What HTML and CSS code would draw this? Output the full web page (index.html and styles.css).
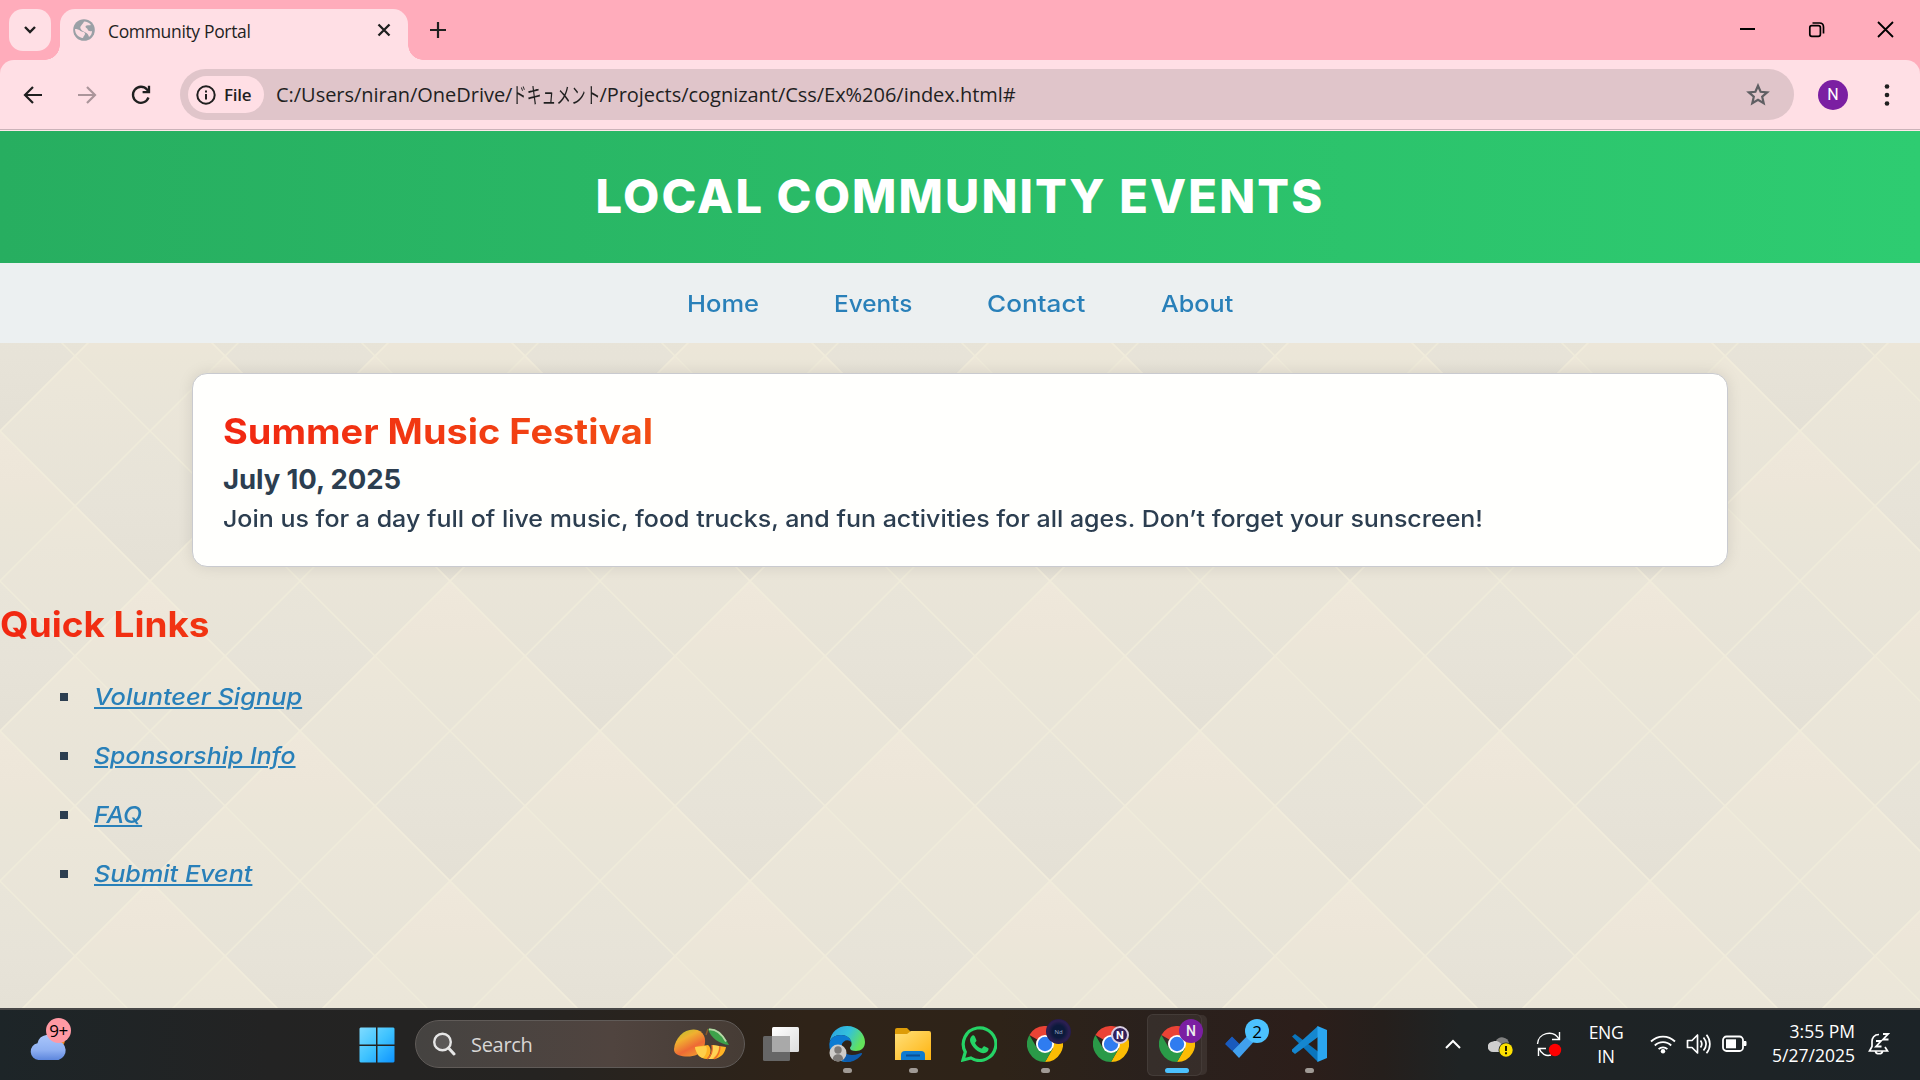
FILE: index.html
```html
<!DOCTYPE html>
<html lang="en">
<head>
<meta charset="utf-8">
<title>Community Portal</title>
<link rel="stylesheet" href="styles.css">
</head>
<body>
<svg class="defs" width="0" height="0" aria-hidden="true">
  <defs>
    <linearGradient id="yel" x1="0" y1="0" x2="1" y2="1"><stop offset="0" stop-color="#ffe07a"/><stop offset="1" stop-color="#ffb30f"/></linearGradient>
    <symbol id="chrome" viewBox="0 0 36 36">
      <path d="M18 18 2.400 9A18 18 0 0 1 33.600 9z" fill="#ea4335"/>
      <path d="M18 9h15.600A18 18 0 0 1 18 36l7.800-13.500z" fill="#fbbc04"/>
      <path d="M18 36A18 18 0 0 1 2.400 9l7.800 13.500L18 27l7.800-4.500z" fill="#2a9a48"/>
      <circle cx="18" cy="18" r="9" fill="#fff"/>
      <circle cx="18" cy="18" r="7.200" fill="#2f7cf0"/>
    </symbol>
  </defs>
</svg>

<div class="window">
  <div class="tabstrip">
    <button class="tab-search"><svg width="12" height="8" viewBox="0 0 12 8"><path d="M1 1l5 5 5-5" fill="none" stroke="#1f1f1f" stroke-width="2.400"/></svg></button>
    <div class="tab">
      <svg class="favicon" width="22" height="22" viewBox="0 0 22 22"><circle cx="11" cy="11" r="10.800" fill="#9aa0a6"/><path d="M2 10c2 0 4 .5 5.500 2 1.500 1 4 .5 4.500 2.500.3 1.500-1.500 2-2 4.500C5.500 18.500 2 15 2 10zM11 2.500c3 0 5.500 1.300 7 3.500-1.500.5-5-.5-5.500 1.500-.3 1.500 1.800 1.200 2.200 3 .3 1.500 1.800 2 4.300 1.500 0 2.500-1 4.500-3 6-.5-2.500-1.500-3.500-3.500-4.500C10.500 12.500 8.500 12 7.500 9.500 6.500 7 10 5.500 11 2.500z" fill="#fbdde2"/></svg>
      <span class="tab-title">Community Portal</span>
      <svg class="tab-close" width="14" height="14" viewBox="0 0 14 14"><path d="M1.500 1.500l11 11m0-11l-11 11" stroke="#1f1f1f" stroke-width="2.300"/></svg>
    </div>
    <svg class="new-tab" width="16" height="16" viewBox="0 0 16 16"><path d="M8 0v16M0 8h16" stroke="#1f1f1f" stroke-width="2.200"/></svg>
    <div class="win-controls">
      <svg width="17" height="17" viewBox="0 0 17 17"><path d="M1 8h15" stroke="#000" stroke-width="2"/></svg>
      <svg width="17" height="17" viewBox="0 0 17 17" fill="none" stroke="#000" stroke-width="1.700"><rect x="1.800" y="4.700" width="10.600" height="10.600" rx="2"/><path d="M4.500 2h7c2.600 0 4 1.400 4 4v6.500"/></svg>
      <svg width="17" height="17" viewBox="0 0 17 17"><path d="M1 1l15 15M16 1L1 16" stroke="#000" stroke-width="1.800"/></svg>
    </div>
  </div>

  <div class="toolbar">
    <svg class="tool back" width="20" height="20" viewBox="0 0 20 20" fill="none" stroke="#1f1f1f" stroke-width="2.200"><path d="M19 10H2.500M10 2l-8 8 8 8"/></svg>
    <svg class="tool forward" width="20" height="20" viewBox="0 0 20 20" fill="none" stroke="#ab959a" stroke-width="2.200"><path d="M1 10h16.500M10 2l8 8-8 8"/></svg>
    <svg class="tool reload" width="20" height="20" viewBox="0 0 20 20" fill="none" stroke="#1f1f1f" stroke-width="2.300"><path d="M17.500 12.500A8 8 0 1 1 16 4.500l1.500 2"/><path d="M18 .8v6.400h-6.400"/></svg>
    <div class="omnibox">
      <div class="chip">
        <svg width="20" height="20" viewBox="0 0 20 20"><circle cx="10" cy="10" r="8.700" fill="none" stroke="#1f1f1f" stroke-width="2"/><path d="M10 9v5.500M10 5.500v2" stroke="#1f1f1f" stroke-width="2"/></svg>
        <span>File</span>
      </div>
      <div class="url"><span>C:/Users/niran/OneDrive/</span><span class="kana"><span class="kana-text">ドキュメント</span></span><span>/Projects/cognizant/Css/Ex%206/index.html#</span></div>
      <svg class="star" width="24" height="23" viewBox="0 0 24 23"><path d="M12 2.700l2.600 6.100 6.600.6-5 4.300 1.500 6.500-5.700-3.500-5.700 3.500 1.500-6.500-5-4.300 6.600-.6z" fill="none" stroke="#5f5f63" stroke-width="2.200"/></svg>
    </div>
    <div class="avatar">N</div>
    <svg class="menu" width="6" height="22" viewBox="0 0 6 22" fill="#1f1f1f"><circle cx="3" cy="2.500" r="2.300"/><circle cx="3" cy="11" r="2.300"/><circle cx="3" cy="19.500" r="2.300"/></svg>
  </div>

  <div class="page">
    <svg class="backdrop" width="1920" height="877">
      <defs>
        <linearGradient id="peach" x1="0" y1="0" x2="0" y2="1"><stop offset="0" stop-color="#efe8db"/><stop offset=".35" stop-color="#ede6d9"/><stop offset=".5" stop-color="#ebe6d8"/><stop offset="1" stop-color="#e8e4d8"/></linearGradient>
        <linearGradient id="soft" x1="0" y1="0" x2="0" y2="1"><stop offset="0" stop-color="#ede7d9"/><stop offset=".25" stop-color="#ebe6d9"/><stop offset="1" stop-color="#e7e3d7"/></linearGradient>
        <linearGradient id="grey" x1="0" y1="0" x2="0" y2="1"><stop offset="0" stop-color="#e9e5d9"/><stop offset=".5" stop-color="#e7e3d8"/><stop offset="1" stop-color="#e4e0d5"/></linearGradient>
        <path id="dia" d="M0 0l75 75-75 75-75-75z"/>
        <pattern id="argyle" width="300" height="300" patternUnits="userSpaceOnUse">
          <rect width="300" height="300" fill="#e8e4d8"/>
          <g fill="url(#peach)"><use href="#dia"/><use href="#dia" x="300"/><use href="#dia" x="150" y="150"/></g>
          <g fill="url(#grey)"><use href="#dia" x="150"/><use href="#dia" y="150"/><use href="#dia" x="300" y="150"/></g>
          <g fill="url(#soft)"><use href="#dia" x="75" y="75"/><use href="#dia" x="225" y="75"/><use href="#dia" x="75" y="225"/><use href="#dia" x="225" y="225"/><use href="#dia" x="75" y="-75"/><use href="#dia" x="225" y="-75"/></g>
          <path d="M0 0l300 300M300 0L0 300" stroke="#f1ecdb" stroke-width="1.800"/>
          <path d="M150 0l150 150M0 150l150 150M150 0L0 150M300 150L150 300" stroke="#efebda" stroke-width="1.600"/>
        </pattern>
      </defs>
      <rect width="1920" height="877" fill="url(#argyle)"/>
    </svg>
    <header class="site-header"><h1>LOCAL COMMUNITY EVENTS</h1></header>
    <nav class="site-nav">
      <a class="n-home">Home</a><a class="n-events">Events</a><a class="n-contact">Contact</a><a class="n-about">About</a>
    </nav>
    <article class="card">
      <h2 class="grad festival">Summer Music Festival</h2>
      <h3>July 10, 2025</h3>
      <p>Join us for a day full of live music, food trucks, and fun activities for all ages. Don’t forget your sunscreen!</p>
    </article>
    <section class="quick">
      <h2 class="grad">Quick Links</h2>
      <ul>
        <li><a class="l-volunteer">Volunteer Signup</a></li>
        <li><a>Sponsorship Info</a></li>
        <li><a>FAQ</a></li>
        <li><a class="l-submit">Submit Event</a></li>
      </ul>
    </section>
  </div>

  <div class="taskbar">
    <div class="weather">
      <svg width="46" height="36" viewBox="0 0 46 36"><defs><linearGradient id="cl" x1="0" y1="0" x2="0" y2="1"><stop offset="0" stop-color="#a9c6fb"/><stop offset=".6" stop-color="#8fb0f2"/><stop offset="1" stop-color="#5d86dd"/></linearGradient></defs><circle cx="27" cy="15" r="8" fill="#f08a1c"/><path d="M8.500 35a8.500 8.500 0 0 1-1-16.800A10.500 10.500 0 0 1 27 15.500a10 10 0 0 1 1.500 19.500z" fill="url(#cl)"/></svg>
      <span class="badge pink">9+</span>
    </div>
    <svg class="start" width="36" height="36" viewBox="0 0 36 36"><defs><linearGradient id="win" gradientUnits="userSpaceOnUse" x1="0" y1="0" x2="36" y2="36"><stop offset="0" stop-color="#81dcff"/><stop offset=".5" stop-color="#3fc3ff"/><stop offset="1" stop-color="#0c92ff"/></linearGradient></defs><path d="M1.500.5H17v17H.5v-16zM18.500.5h16l1 1v16h-17zM.5 19H17v16.500H1.500l-1-1zM18.500 19h17v15.500l-1 1h-16z" fill="url(#win)"/></svg>
    <div class="search">
      <svg width="24" height="24" viewBox="0 0 24 24"><circle cx="10.500" cy="10" r="8.300" fill="#5b5857" stroke="#e6e6e6" stroke-width="2.400"/><path d="M16.500 16l5.500 6" stroke="#e6e6e6" stroke-width="3" stroke-linecap="round"/></svg>
      <span>Search</span>
      <svg class="mango" width="58" height="32" viewBox="0 0 58 32">
        <defs><linearGradient id="mg" x1=".2" y1="0" x2=".8" y2="1"><stop offset="0" stop-color="#b9c22f"/><stop offset=".3" stop-color="#f0b030"/><stop offset=".65" stop-color="#ee6a35"/><stop offset="1" stop-color="#f0a030"/></linearGradient></defs>
        <path d="M1 21C2 10 11 1 21 1.500 31 2 34 11 31 19c-3 8-11 10-19 9.500C6 28 .6 26 1 21z" fill="url(#mg)"/>
        <path d="M33 7l2-6" stroke="#8b5a2b" stroke-width="1.500"/><path d="M35 1c10-2 16 7 21 16C46 16 38 10 35 1z" fill="#3da24a"/><path d="M36 1.500c7-.5 13 5 17 12" stroke="#b8d8a8" stroke-width="1.800" fill="none"/>
        <path d="M22 19l13-2c4 3 3 10-1 14-7 0-11-5-12-12z" fill="#ffb324"/><path d="M22 19l11-1c2 4 0 9-3 12-4-1-7-5-8-11z" fill="#ffcf4a"/><path d="M39 17l14 2c-1 6-5 11-12 12h-6c4-3 5-8 4-14z" fill="#ffb324"/><path d="M39 17l7 1c0 6-3 10-7 13h-4c4-3 5-8 4-14z" fill="#ffd256"/><path d="M39 17c1 6-1 11-5 14M47 18c0 5-2 10-6 13" fill="none" stroke="#ea6a2a" stroke-width="1.300"/>
      </svg>
    </div>
    <div class="apps">
      <div class="app"><svg width="36" height="36" viewBox="0 0 36 36"><defs><linearGradient id="tv" x1="0" y1="0" x2="1" y2="1"><stop offset="0" stop-color="#fff"/><stop offset="1" stop-color="#dcdcdc"/></linearGradient></defs><rect y="10" width="27" height="25" rx="1.500" fill="#666"/><rect x="9" y="1" width="27" height="25" rx="1.500" fill="url(#tv)"/><path d="M9 10h18v16H9z" fill="#a9a9a9"/></svg></div>
      <div class="app running"><svg width="36" height="36" viewBox="0 0 36 36"><defs><linearGradient id="ed" x1="0" y1="0" x2="1" y2=".4"><stop offset="0" stop-color="#2a9fe0"/><stop offset=".55" stop-color="#33c1dc"/><stop offset="1" stop-color="#63e25a"/></linearGradient></defs><path d="M.5 16C2 6 9 0 18 0c11 0 18 8 18 16 0 6-4 9-9 9-4 0-6-1-6-3 0-1 2-2 1.500-5C22 12 17 9 12 9 6 9 2 12 .5 16z" fill="url(#ed)"/><path d="M.3 18C1 12 6 9 12 9c6 0 10 3.500 10.500 7.500-3-4-9-2-10 3C11 27 18 32 25 34c-2 1.300-4.500 2-7 2C8 36 0 29 .3 18z" fill="#0c7bd2"/><path d="M12.500 19C11 25 17 29 23 29c5 0 8-2 9.500-2 1 0 .8 1-.5 2.500C28 34 23 36 18 36c-7-2-9-9-8-13 .4-2 1.500-3.500 2.500-4z" fill="#0d5cae"/><circle cx="9" cy="27" r="8.500" fill="#ceccca"/><circle cx="9" cy="24" r="3.700" fill="#7d7a78"/><path d="M3.800 33.500c0-7 10.400-7 10.400 0a8.500 8.500 0 0 1-10.400 0z" fill="#7d7a78"/></svg></div>
      <div class="app running"><svg width="36" height="36" viewBox="0 0 36 36"><path d="M0 4a2 2 0 0 1 2-2h10l4 4v6H0z" fill="#dd9c08"/><path d="M0 8h12l4-3h18a2 2 0 0 1 2 2v27H0z" fill="url(#yel)"/><path d="M6 34v-5a4 4 0 0 1 4-4h16a4 4 0 0 1 4 4v5z" fill="#0f7bd0"/><path d="M11 29.500h14" stroke="#0b4f94" stroke-width="2"/></svg></div>
      <div class="app"><svg width="36" height="36" viewBox="0 0 36 36"><path d="M2 34l2.300-8A16.300 16.300 0 1 1 10 32z" fill="none" stroke="#25d366" stroke-width="3.200"/><path d="M10 11c2-3 3.500-2 4.500 1l1 2.500c0 1-1.500 2-1.500 2.500 1.500 3 3.500 4.500 6.500 5.500 1 0 1.700-2.500 3-2.200l3.500 1.700c1 .5.500 2.500-.500 3.500-3 3-7 1.500-10-.5-3-2-5.500-5-7-8.500-.7-2-.7-4 .5-5.500z" fill="#25d366"/></svg></div>
      <div class="app running"><svg width="36" height="36"><use href="#chrome"/></svg><span class="badge navy">Nd</span></div>
      <div class="app"><svg width="36" height="36"><use href="#chrome"/></svg><span class="badge ring">N</span></div>
      <div class="app active"><svg width="36" height="36"><use href="#chrome"/></svg><span class="badge purple">N</span></div>
      <div class="app"><svg width="36" height="36" viewBox="0 0 36 36"><path d="M1 17l6-6 11.500 12L13 30z" fill="#1b5fc4"/><path d="M7.500 25L28 4l6 6-20 22z" fill="#41a0ee"/><path d="M0 18l7-7.500 7.500 7.500-7.200 7z" fill="#195abd"/></svg><span class="badge blue">2</span></div>
      <div class="app running"><svg width="36" height="36" viewBox="0 0 36 36"><path d="M1 10.500L4 8l23 17.500V36z" fill="#0a75bd"/><path d="M1 25.500L4 28l23-17V0L1 23.500z" fill="#1587d0"/><path d="M26.500 0L36 4v28l-9.500 4z" fill="#2ba6f1"/></svg></div>
    </div>
    <div class="tray">
      <svg class="t-up" width="16" height="10" viewBox="0 0 16 10"><path d="M1 9l7-7 7 7" fill="none" stroke="#fff" stroke-width="2"/></svg>
      <svg class="t-cloud" width="26" height="22" viewBox="0 0 26 22"><path d="M8 6a7 7 0 0 1 13 2v8H9z" fill="#808080"/><path d="M5 17a5 5 0 0 1 0-10.500C10 5 13 8 15 12v5z" fill="#cfcfcf"/><circle cx="18" cy="15" r="7.500" fill="#1f2426"/><circle cx="18" cy="15" r="6.700" fill="#fde000"/><path d="M18 11v5M18 17.300v2" stroke="#000" stroke-width="1.800"/></svg>
      <svg class="t-sync" width="26" height="26" viewBox="0 0 26 26" fill="none" stroke="#fff" stroke-width="1.400"><path d="M1.500 13C2 2 17-2 23 8M23.500 1v7.500H16M15 24c-5 1.500-10-1-12-7M2.500 25v-7.500H10"/><circle cx="19" cy="19" r="6.200" fill="#f00" stroke="none"/></svg>
      <div class="lang">ENG<br>IN</div>
      <svg class="t-wifi" width="26" height="20" viewBox="0 0 26 20" fill="none" stroke="#fff" stroke-width="1.800"><path d="M1 7.500a17 17 0 0 1 24 0M4.800 11.500a11.500 11.500 0 0 1 16.400 0M8.600 15.200a6.200 6.200 0 0 1 8.800 0"/><circle cx="13" cy="17.200" r="2.200" fill="#fff" stroke="none"/></svg>
      <svg class="t-vol" width="25" height="22" viewBox="0 0 25 22" fill="none" stroke="#fff" stroke-width="1.700"><path d="M1.500 7.500H6L11.500 2v18L6 14.500H1.500z" stroke-linejoin="round"/><path d="M14.500 7.500c1.500 2 1.500 5 0 7M17.500 4.500c3.200 4 3.200 9 0 13M20.500 1.800c4.500 5.500 4.500 13 0 18.500"/></svg>
      <svg class="t-bat" width="25" height="18" viewBox="0 0 25 18"><rect x="1" y="1.500" width="20" height="14.500" rx="3.500" fill="none" stroke="#fff" stroke-width="1.800"/><rect x="4" y="4.300" width="10" height="9" fill="#fff"/><path d="M22 6.500h2v4h-2z" fill="#fff" stroke="#fff"/></svg>
      <div class="clock">3:55 PM<br>5/27/2025</div>
      <svg class="t-bell" width="22" height="24" viewBox="0 0 22 24" fill="none" stroke="#fff" stroke-width="1.700"><path d="M11 2.500C6 2.500 4 6 4 9.500v5L1.500 19h18L17 15M7.500 19.500c.5 3 6.500 3 7 0"/><path d="M8 9h5l-5 5.500h5.500M15 2h5l-5 5.500h5.500" stroke-width="1.800"/></svg>
    </div>
  </div>
</div>
</body>
</html>
```
FILE: styles.css
```css
* { box-sizing: border-box; }
body { margin: 0; overflow: hidden; background: #ffacbb; font-family: "Open Sans", "Noto Sans CJK JP", sans-serif; }
h1, h2, h3, p, ul { margin: 0; padding: 0; }
svg { flex: none; display: block; }
.defs { position: absolute; }
.window { position: relative; z-index: 0; display: flex; flex-direction: column; width: 1920px; height: 1080px; }

/* Tab strip */
.tabstrip { display: flex; height: 60px; background: #ffacbb; padding: 9px 26px 0 9px; }
.tab-search { width: 42px; height: 42px; border: 0; padding: 0; border-radius: 14px; background: #ffdfe5; display: flex; align-items: center; justify-content: center; }
.tab { position: relative; display: flex; width: 348px; height: 51px; margin-left: 9px; padding: 0 17px 9px 13px; align-items: center; background: #ffdfe5; border-radius: 15px 15px 0 0; }
.tab::before, .tab::after { content: ""; position: absolute; bottom: 0; width: 15px; height: 15px; }
.tab::before { left: -15px; background: radial-gradient(circle at 0 0, transparent 14.5px, #ffdfe5 15px); }
.tab::after { right: -15px; background: radial-gradient(circle at 100% 0, transparent 14.5px, #ffdfe5 15px); }
.tab-title { flex: 1; margin: 1px 0 0 13px; font-size: 17.5px; letter-spacing: -0.34px; color: #1f1f1f; line-height: 24px; }
.new-tab { margin: 13px 0 0 22px; }
.win-controls { display: flex; gap: 52px; margin: 12px 0 0 auto; }

/* Address row */
.toolbar { display: flex; height: 71px; align-items: center; padding: 0 30px 1px 23px; border-radius: 14px 14px 0 0; background: #ffdfe5; box-shadow: inset 0 -1px #ffe6ea, inset 0 -2px #cbb3b9; }
.forward { margin-left: 34px; }
.reload { margin-left: 34px; }
.omnibox { display: flex; align-items: center; width: 1614px; height: 51px; margin: -1px 0 0 29px; padding: 0 24px 0 8px; border-radius: 26px; background: #e0c5ca; color: #1f1f1f; }
.chip { display: flex; align-items: center; width: 76px; height: 37px; padding-left: 8px; border-radius: 19px; background: #ffdfe5; font-weight: 600; font-size: 17px; letter-spacing: -0.3px; }
.chip span { margin: -1px 0 0 8px; }
.url { display: flex; flex: 1; margin-left: 12px; font-size: 20px; letter-spacing: -0.03px; line-height: 30px; }
.kana { width: 87px; margin-top: -2px; font-family: "Noto Sans CJK JP", sans-serif; font-size: 22px; white-space: nowrap; letter-spacing: 0; }
.kana-text { display: inline-block; transform: scaleX(.67); transform-origin: 0 50%; }
.avatar { width: 30px; height: 30px; margin-left: 24px; border-radius: 50%; background: #7b1fa2; color: #fff; font: 400 16px/30px Roboto, sans-serif; text-align: center; }
.menu { margin-left: auto; }

/* Page */
.page { position: relative; height: 877px; font-family: Inter, sans-serif; color: #2c3e50; overflow: hidden; }
.backdrop { position: absolute; left: 0; top: 0; z-index: -1; }
.site-header { height: 132px; display: flex; justify-content: center; padding-top: 36px; background: linear-gradient(to right, #27ae60, #2ecc71); color: #fff; }
h1 { font-size: 47px; font-weight: 800; line-height: 58px; letter-spacing: 2.15px; white-space: nowrap; }
.site-nav { height: 80px; display: flex; justify-content: center; align-items: center; gap: 75px; background: #ecf0f1; color: #2980b9; font-size: 23.5px; font-weight: 500; }
.site-nav a { transform-origin: 0 50%; }
.n-home { width: 72px; transform: scaleX(1.085); }
.n-events { width: 78px; transform: scaleX(1.035); }
.n-contact { width: 99px; transform: scaleX(1.11); }
.n-about { width: 72px; transform: scaleX(1.07); }
.card { width: 1536px; height: 194px; margin: 30px auto 0; padding: 34px 30px 0; border: 1px solid #c9cacf; border-radius: 15px; background: #fffffd; box-shadow: 0 0 15px rgba(0, 0, 0, .1); }
.grad { min-width: 95%; background: linear-gradient(to right, #f12711, #f5af19); -webkit-background-clip: text; background-clip: text; color: transparent; font-size: 35px; font-weight: 700; line-height: 46px; transform: scaleX(1.055); transform-origin: 0 50%; }
.festival { transform: scaleX(1.083); }
h3 { font-size: 27.5px; font-weight: 700; line-height: 46px; letter-spacing: -.1px; margin-top: 2px; }
.card p { font-size: 23.5px; font-weight: 500; line-height: 36px; white-space: nowrap; margin-top: -1px; transform: scaleX(1.063); transform-origin: 0 50%; }
.quick { margin-top: 34px; }
.quick ul { margin-top: 20px; list-style: none; padding-left: 60px; }
.quick li { display: flex; align-items: center; height: 59px; }
.quick li::before { content: ""; width: 8px; height: 8px; background: #2c3e50; margin-right: 26px; }
.quick a { color: #2980b9; font-size: 23.5px; font-style: italic; font-weight: 500; text-decoration: underline; text-decoration-thickness: 2px; text-underline-offset: 2px; transform: scaleX(1.057); transform-origin: 0 50%; }
.quick .l-volunteer { transform: scaleX(1.08); }
.quick .l-submit { transform: scaleX(1.07); }

/* Taskbar */
.taskbar { display: flex; align-items: center; height: 72px; border-top: 2px solid #474747; background: linear-gradient(to right, #1d2528, #232323 14%, #252321 28%, #2f2318 42%, #2e2318 52%, #2a211d 60%, #2c1e1a 68%, #251f1c 72%, #1f2324 76%, #1c2327); color: #fff; }
.badge { position: absolute; display: flex; align-items: center; justify-content: center; border-radius: 50%; }
.weather { position: relative; width: 46px; height: 70px; margin-left: 30px; padding-top: 15px; }
.pink { left: 16px; top: 8px; width: 25px; height: 25px; background: #ff99a4; color: #000; font-size: 17px; letter-spacing: -.5px; }
.start { margin-left: 283px; margin-top: -1px; }
.search { display: flex; align-items: center; width: 330px; height: 48px; margin: -2px 0 0 20px; padding: 0 13px 0 16px; border: 1px solid #605b58; border-radius: 24px; background: linear-gradient(to right, #454341, #50443f 60%, #463c35); color: #d8d6d5; font-size: 20px; letter-spacing: -.3px; }
.search span { margin-left: 15px; }
.mango { margin-left: auto; }
.apps { display: flex; margin-left: 3px; height: 70px; }
.app { position: relative; width: 66px; height: 70px; padding: 16px 15px; }
.running::after, .active::after { content: ""; position: absolute; left: 29px; top: 58px; width: 9px; height: 5px; border-radius: 2.5px; background: #a09a95; }
.active::before { content: ""; position: absolute; left: 3px; top: 4px; width: 53px; height: 60px; border-radius: 6px; background: rgba(255, 255, 255, .06); border: 1px solid rgba(255, 255, 255, .07); box-shadow: 6px 0 0 -1px rgba(255, 255, 255, .08); }
.active::after { left: 21px; width: 24px; background: #4cc2ff; }
.active svg { position: relative; }
.navy { left: 34px; top: 9px; width: 25px; height: 25px; background: radial-gradient(#0c1a3c 35%, #2c1f52 60%, #17123a); color: #9fb0cc; font-size: 6px; }
.ring { left: 33px; top: 16px; width: 18px; height: 18px; background: #33205a; border: 2px solid #d9cfe2; color: #fff; font: 700 11px Roboto, sans-serif; }
.purple { left: 35px; top: 9px; width: 24px; height: 24px; background: #7b1fa2; color: #eee; font: 500 14px Roboto, sans-serif; }
.blue { left: 35px; top: 9px; width: 24px; height: 24px; background: #4cc2ff; color: #000; font-size: 17px; }

/* Tray */
.tray { display: flex; align-items: center; height: 70px; margin: -2px 0 0 103px; font-size: 17.5px; line-height: 24px; }
.t-cloud { margin-left: 27px; margin-top: 4px; }
.t-sync { margin-left: 22px; }
.lang { width: 44px; margin: -1px 0 0 22px; text-align: center; letter-spacing: -.4px; }
.t-wifi { margin-left: 22px; }
.t-vol { margin-left: 10px; }
.t-bat { margin-left: 11px; }
.clock { width: 90px; margin: -2px 0 0 18px; text-align: right; }
.t-bell { margin-left: 13px; }
```
